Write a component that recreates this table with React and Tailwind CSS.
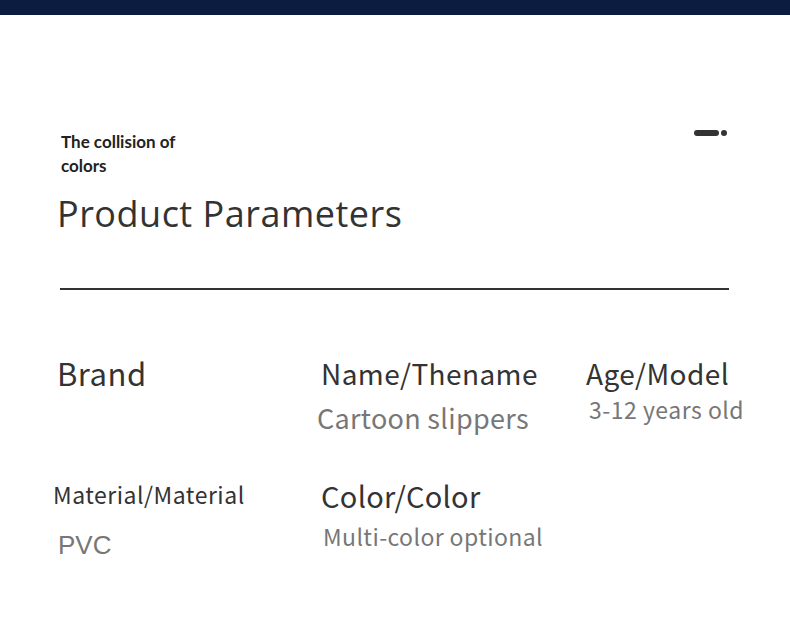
export default function App() {
  return (
    <div className="w-[790px] h-[643px] bg-white overflow-hidden text-[#333]" style={{ fontFamily: '"Noto Sans", "Noto Sans CJK SC", sans-serif' }}>
      <div className="h-[15px] bg-[#0b1c40]" />

      <div className="flex items-start justify-between pl-[61px] pr-[63px] pt-[115px]">
        <p className="text-[17px] leading-[24px] font-bold text-[#222] font-['Lato',sans-serif]">
          The collision of
          <br />
          colors
        </p>
        <div className="flex items-center gap-[2px]">
          <span className="block w-[25px] h-[6px] rounded-full bg-[#333]" />
          <span className="block w-[6px] h-[6px] rounded-full bg-[#333]" />
        </div>
      </div>

      <h1 className="ml-[57px] mt-[12px] text-[36px] leading-[48px] tracking-[0.5px] font-['Open_Sans',sans-serif]">
        Product Parameters
      </h1>

      <div className="ml-[60px] w-[669px] h-[2px] bg-[#333] mt-[50px]" />

      <div className="flex mt-[63px] font-['Noto_Sans_CJK_SC',sans-serif]">
        <div className="w-[317px] pl-[57px]">
          <p className="text-[31px] leading-[40px] tracking-[0.5px]">Brand</p>
        </div>
        <div className="w-[269px]">
          <p className="text-[28px] leading-[40px] tracking-[0.4px] pl-[4px]">Name/Thename</p>
          <p className="text-[27px] leading-[40px] tracking-[0.3px] mt-[5px] text-[#777]">Cartoon slippers</p>
        </div>
        <div className="flex-1">
          <p className="text-[28px] leading-[40px] tracking-[0.4px]">Age/Model</p>
          <p className="text-[23px] leading-[32px] tracking-[0.5px] pl-[3px] text-[#777]">3-12 years old</p>
        </div>
      </div>

      <div className="flex mt-[40px] font-['Noto_Sans_CJK_SC',sans-serif]">
        <div className="w-[268px] pl-[53px]">
          <p className="text-[23px] leading-[32px] tracking-[0.5px]">Material/Material</p>
          <p className="text-[26px] leading-[40px] pl-[5px] mt-[15px] text-[#777] font-['Liberation_Sans',sans-serif]">PVC</p>
        </div>
        <div className="flex-1 pl-[53px] -mt-[3px]">
          <p className="text-[29px] leading-[40px] tracking-[0.3px]">Color/Color</p>
          <p className="text-[23px] leading-[32px] tracking-[0.4px] pl-[2px] mt-[5px] text-[#777]">Multi-color optional</p>
        </div>
      </div>
    </div>
  )
}
